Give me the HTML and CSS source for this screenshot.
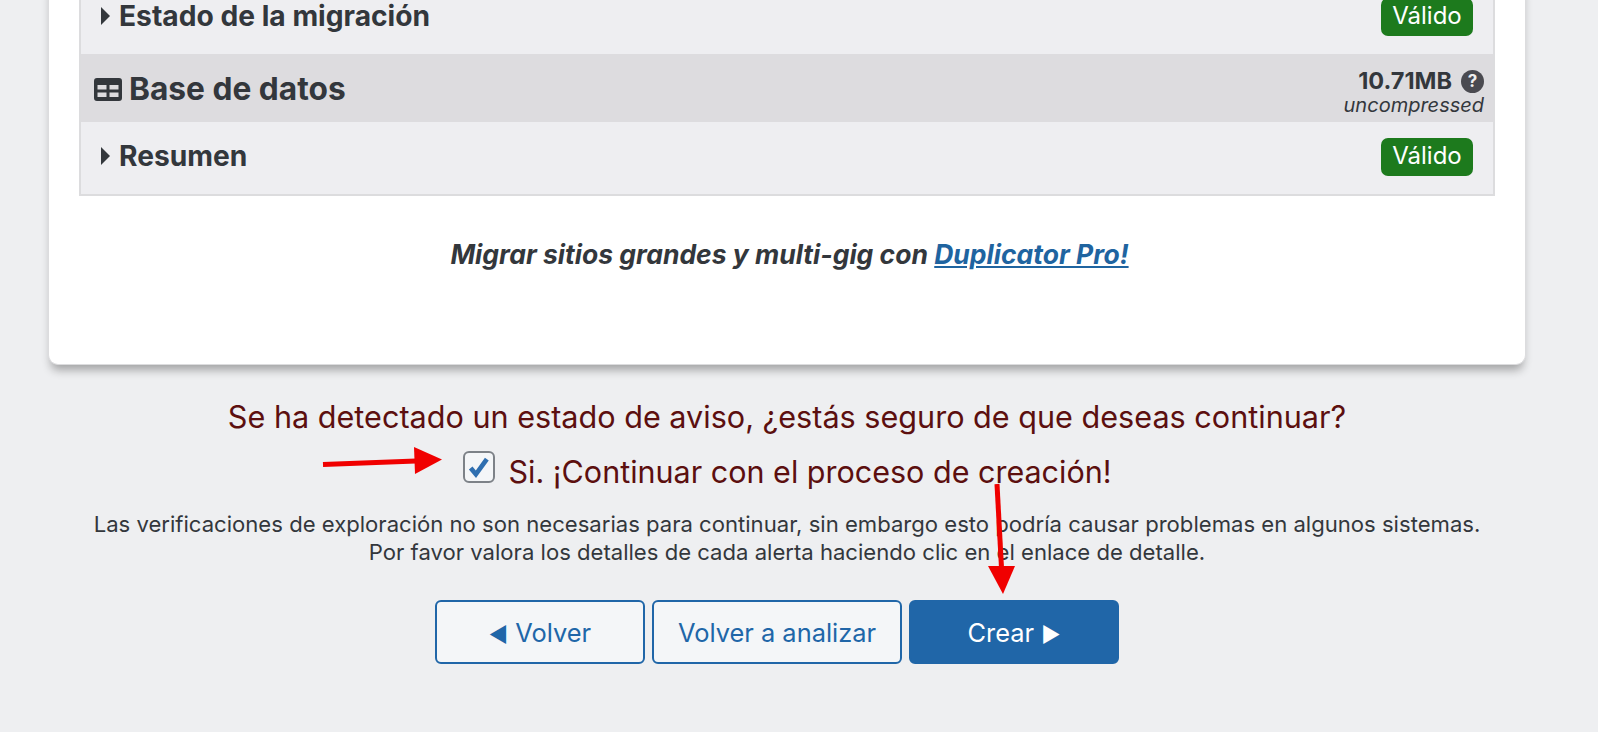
FILE: index.html
```html
<!DOCTYPE html>
<html lang="es">
<head>
    <meta charset="UTF-8">
    <meta name="viewport" content="width=device-width, initial-scale=1.0">
    <title>Duplicator - Analizar</title>
    <link rel="stylesheet" href="styles.css">
</head>
<body>
    <div class="wrapper">
        <div class="card">
            <div class="sections">
                <div class="row">
                    <div class="row-title"><span class="caret"></span>Estado de la migración</div>
                    <span class="badge">Válido</span>
                </div>
                <div class="row-head">
                    <div class="head-title">
                        <svg class="table-icon" viewBox="0 0 28 24" width="28" height="24">
                            <path fill="currentColor" fill-rule="evenodd" d="M3 1h22a3 3 0 0 1 3 3v17a3 3 0 0 1-3 3H3a3 3 0 0 1-3-3V4a3 3 0 0 1 3-3zM3.500 8v4.500h9V8zm12 0v4.500h9V8zm-12 7.500V20h9v-4.500zm12 0V20h9v-4.500z"/>
                        </svg>
                        Base de datos
                    </div>
                    <div class="size">
                        <div class="size-line">10.71MB
                            <span class="help">?</span>
                        </div>
                        <div class="size-note">uncompressed</div>
                    </div>
                </div>
                <div class="row">
                    <div class="row-title"><span class="caret"></span>Resumen</div>
                    <span class="badge">Válido</span>
                </div>
            </div>
            <p class="promo">Migrar sitios grandes y multi-gig con <a href="#">Duplicator Pro!</a></p>
        </div>

        <div class="warning">Se ha detectado un estado de aviso, ¿estás seguro de que deseas continuar?</div>
        <label class="confirm">
            <span class="checkbox">
                <svg viewBox="0 0 24 24" width="25" height="25">
                    <path fill="none" stroke="#2f6fb0" stroke-width="4.500" d="M4.500 12.500l5 6L20 4"/>
                </svg>
            </span>
            Si. ¡Continuar con el proceso de creación!
        </label>
        <div class="note">
            Las verificaciones de exploración no son necesarias para continuar, sin embargo esto podría causar problemas en algunos sistemas.<br>
            Por favor valora los detalles de cada alerta haciendo clic en el enlace de detalle.
        </div>
        <div class="actions">
            <button class="btn"><span class="tri">◄</span> Volver</button>
            <button class="btn">Volver a analizar</button>
            <button class="btn primary">Crear <span class="tri">►</span></button>
        </div>
    </div>

    <!-- annotation arrows on top of the screenshot -->
    <svg class="arrows" width="1598" height="732" viewBox="0 0 1598 732">
        <path d="M323 464.500L416 461" stroke="#f00000" stroke-width="5" fill="none"/>
        <path d="M414 447L442 459.500L415 474z" fill="#f00000"/>
        <path d="M997 484L1001.500 568" stroke="#f00000" stroke-width="5" fill="none"/>
        <path d="M988 566L1015 566L1003 594z" fill="#f00000"/>
    </svg>
</body>
</html>
```
FILE: styles.css
```css
body {
    font-family: Inter, "Noto Sans", sans-serif;
    background-color: #eeeff1;
    color: #33373c;
    margin: 0;
    height: 732px;
    overflow: hidden;
    position: relative;
}
.wrapper {
    width: 1478px;
    margin-left: 48px;
    margin-top: -18px;
}
.card {
    background-color: #ffffff;
    border: 1px solid #dcdcde;
    border-top: none;
    border-radius: 0 0 10px 10px;
    box-shadow: 0 8px 10px -3px rgba(0, 0, 0, 0.32);
    padding: 0 30px;
    height: 383px;
    box-sizing: border-box;
}
.sections {
    background-color: #eeeef1;
    border: 2px solid #dcdcde;
    border-top: none;
    height: 214px;
    box-sizing: border-box;
}
.row {
    height: 72px;
    box-sizing: border-box;
    display: flex;
    align-items: center;
    justify-content: space-between;
    padding: 0 20px 2px 20px;
}
.row-title {
    font-size: 28.200px;
    font-weight: 700;
    display: flex;
    align-items: center;
    margin-bottom: 3px;
}
.caret {
    width: 0;
    height: 0;
    border-left: 9px solid #33373c;
    border-top: 9px solid transparent;
    border-bottom: 9px solid transparent;
    margin-right: 9px;
}
.badge {
    background-color: #1d7a1d;
    color: #ffffff;
    font-size: 24px;
    width: 92px;
    height: 38px;
    line-height: 36px;
    text-align: center;
    border-radius: 7px;
}
.row-head {
    height: 68px;
    background-color: #dddcdf;
    display: flex;
    align-items: center;
    justify-content: space-between;
    padding: 0 9px 0 13px;
}
.head-title {
    font-size: 31.700px;
    font-weight: 700;
    display: flex;
    align-items: center;
    gap: 7px;
}
.table-icon {
    margin-top: 2px;
}
.size {
    text-align: right;
    padding-top: 6px;
}
.size-line {
    font-size: 23.500px;
    font-weight: 700;
    line-height: 28px;
    display: flex;
    align-items: center;
    justify-content: flex-end;
    gap: 9px;
}
.help {
    width: 23px;
    height: 23px;
    border-radius: 50%;
    background-color: #4a4a50;
    color: #eeeeee;
    font-size: 17px;
    line-height: 23px;
    text-align: center;
}
.size-note {
    font-size: 20px;
    font-style: italic;
    line-height: 20px;
}
.promo {
    margin: 43px 0 0;
    padding-left: 5px;
    text-align: center;
    font-size: 26.500px;
    line-height: 30px;
    font-weight: 700;
    font-style: italic;
}
.promo a {
    color: #1f64a0;
}
.warning {
    margin-top: 34px;
    text-align: center;
    font-size: 30.600px;
    line-height: 36px;
    color: #5c0f0f;
}
.confirm {
    margin-top: 16px;
    display: flex;
    justify-content: center;
    align-items: flex-start;
    gap: 14px;
    font-size: 30.500px;
    line-height: 42px;
    color: #5c0f0f;
}
.checkbox {
    width: 32px;
    height: 32px;
    box-sizing: border-box;
    background-color: #f4f6f8;
    border: 2px solid #7d8288;
    border-radius: 6px;
    display: flex;
    align-items: center;
    justify-content: center;
}
.note {
    margin-top: 17px;
    text-align: center;
    font-size: 22.100px;
    line-height: 28px;
}
.actions {
    margin-top: 34px;
    display: flex;
    justify-content: center;
    gap: 7px;
    padding-right: 20px;
}
.btn {
    font-family: Inter, "Noto Sans", sans-serif;
    font-size: 25.400px;
    height: 64px;
    padding: 0 24px;
    min-width: 210px;
    color: #2066a8;
    background-color: #f4f6f8;
    border: 2px solid #2066a8;
    border-radius: 6px;
}
.btn.primary {
    background-color: #2066a8;
    color: #ffffff;
}
.tri {
    font-size: 21px;
}
.arrows {
    position: absolute;
    left: 0;
    top: 0;
}
```
